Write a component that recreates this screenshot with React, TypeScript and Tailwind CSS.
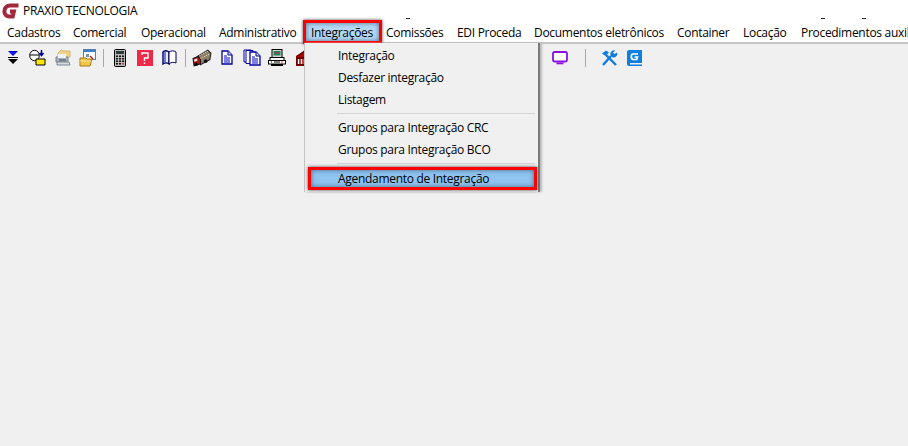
import React from "react";

const font = { fontFamily: '"Open Sans", "Noto Sans", sans-serif', letterSpacing: "-0.3px" };

function Logo() {
  return (
    <svg width="17" height="16" viewBox="0 0 17 16" className="shrink-0">
      <path d="M16.500 2.400H8.500C4.500 2.400 2.400 5 2.400 8.300c0 3 2 5.200 5 5.200h3.300l1.200-5H8" fill="none" stroke="#a02a3c" strokeWidth="4" />
    </svg>
  );
}

function IconArrows() {
  return (
    <svg width="12" height="15" viewBox="0 0 12 15">
      <path d="M1 1h10L6 6z" fill="#0000c8" />
      <path d="M3 2h6L6 5z" fill="#1818ff" />
      <rect x="1" y="7" width="10" height="1" fill="#000" />
      <path d="M1 9h10l-5 5z" fill="#000" />
    </svg>
  );
}
function IconQuery() {
  return (
    <svg width="17" height="17" viewBox="0 0 17 17">
      <ellipse cx="5.500" cy="6.500" rx="4.800" ry="5.200" fill="#fff" stroke="#000" />
      <path d="M1 6h9" stroke="#000" />
      <path d="M12.500 1v5M10.500 4l2 2.500 2-2.500" fill="none" stroke="#0000a8" strokeWidth="1.500" />
      <path d="M7 10h9v6H7z" fill="#ffe800" stroke="#000" />
    </svg>
  );
}
function IconPrintFolder() {
  return (
    <svg width="18" height="18" viewBox="0 0 18 18">
      <path d="M4 4l3-3 2 1h7v6H4z" fill="#f0d48a" stroke="#d0b472" />
      <path d="M2 8h12v5H2z" fill="#aab2bb" stroke="#7c8692" />
      <path d="M4 5h8v4H4z" fill="#eef2f7" />
      <path d="M3 13h12l1 3H3z" fill="#d4dae0" stroke="#7c8692" />
      <path d="M5 11h7" stroke="#434b55" />
    </svg>
  );
}
function IconFolderWin() {
  return (
    <svg width="17" height="18" viewBox="0 0 17 18">
      <rect x="4.500" y="0.500" width="12" height="10" fill="#fff" stroke="#5c7fa8" />
      <rect x="5" y="1" width="11" height="2" fill="#3d7cc9" />
      <path d="M7 5h3v3H7z" fill="#7d93ab" />
      <path d="M11 7l3 3" stroke="#b02a2a" strokeWidth="1.500" />
      <path d="M1 9h6l1 1h5l-2 7H1z" fill="#f3c64a" stroke="#a37c18" />
      <path d="M1 12h11" stroke="#fbe49a" />
    </svg>
  );
}
function IconCalc() {
  return (
    <svg width="12" height="18" viewBox="0 0 12 18">
      <rect x="0.500" y="0.500" width="11" height="17" rx="1" fill="#b9b9b9" stroke="#000" />
      <rect x="2" y="2" width="8" height="3" fill="#2c3a3a" />
      {[6.5, 9, 11.5, 14].map((y) =>
        [2, 5, 8].map((x) => <rect key={`${x}-${y}`} x={x} y={y} width="2" height="1.500" fill={y === 14 && x === 8 ? "#d03a3a" : "#111"} />)
      )}
    </svg>
  );
}
function IconHelp() {
  return (
    <svg width="16" height="16" viewBox="0 0 16 16">
      <rect width="16" height="16" fill="#ef2948" />
      <path d="M5 5V3h6v5H7.500v3" fill="none" stroke="#fff" strokeWidth="1.400" />
      <rect x="6.800" y="12.500" width="1.400" height="1.500" fill="#fff" />
    </svg>
  );
}
function IconBook() {
  return (
    <svg width="15" height="15" viewBox="0 0 15 15">
      <path d="M1 2c2-2 4-1.500 6 0v12c-2-1.500-4-1.500-6 0z" fill="#e6eefc" stroke="#000060" strokeWidth="1.400" />
      <path d="M7 2c2-1.500 5-1.500 7 0v11c-2-1-5-1-7 1z" fill="#fff" stroke="#000060" />
      <path d="M3 2v10" stroke="#0000c8" />
    </svg>
  );
}
function IconTruck() {
  return (
    <svg width="20" height="18" viewBox="0 0 19 17">
      <path d="M5 7l10-6 3 3-1 6-9 5z" fill="#8f7f68" stroke="#222" />
      <path d="M7 6l8-4M8 9l8-4" stroke="#e4d7b8" strokeDasharray="1 1" />
      <path d="M1 9l5-2 2 3v4l-6 2z" fill="#b01818" stroke="#111" />
      <circle cx="4" cy="14.500" r="1.700" fill="#111" />
      <circle cx="13" cy="11.500" r="1.700" fill="#111" />
      <path d="M2 10l3-1v2l-3 1z" fill="#e8e8e8" />
    </svg>
  );
}
function DocShape({ x = 0, y = 0 }: { x?: number; y?: number }) {
  return (
    <g transform={`translate(${x} ${y})`}>
      <path d="M1 1h6l4 4v9H1z" fill="#fff" stroke="#0000a0" strokeWidth="1.300" />
      <path d="M7 1v4h4" fill="#c8d0f4" stroke="#0000a0" />
      <path d="M3 6h3M3 8h6M3 10h6M3 12h6" stroke="#0000c0" />
    </g>
  );
}
function IconDoc() {
  return (
    <svg width="12" height="15" viewBox="0 0 12 15">
      <DocShape />
    </svg>
  );
}
function IconDocs() {
  return (
    <svg width="18" height="17" viewBox="0 0 18 17">
      <path d="M1 1h7v12H1z" fill="#fff" stroke="#0000a0" />
      <path d="M3 1.500h7v13H3z" fill="#fff" stroke="#0000a0" />
      <DocShape x={6} y={2} />
    </svg>
  );
}
function IconPrinter() {
  return (
    <svg width="18" height="18" viewBox="0 0 18 18">
      <rect x="4" y="0.500" width="10" height="8" fill="#d4d4d4" stroke="#000" />
      <rect x="5.500" y="2" width="7" height="4.500" fill="#1a8a5a" />
      <rect x="7.500" y="3" width="3" height="2" fill="#b03060" />
      <rect x="2" y="8.500" width="14" height="3" fill="#fff" stroke="#000" />
      <rect x="0.500" y="11.500" width="17" height="3.500" fill="#fff" stroke="#000" />
      <path d="M3 13h1M6 13h6" stroke="#000" />
      <path d="M13 13h2" stroke="#d03030" />
      <rect x="3" y="15" width="12" height="2" fill="#000" />
    </svg>
  );
}
function IconHouse() {
  return (
    <svg width="14" height="17" viewBox="0 0 14 17">
      <path d="M1 7.500L11 0l3 3v14H1z" fill="#b00000" />
      <path d="M1 7.500L12 1" stroke="#3a0000" />
      <path d="M3.500 10v5M6.500 10v5M9.500 10v5" stroke="#fff" strokeWidth="1.500" />
      <path d="M2 9h10v7H2z" fill="none" stroke="#000" strokeWidth="0.800" />
    </svg>
  );
}
function IconMonitor() {
  return (
    <svg width="16" height="14" viewBox="0 0 16 14">
      <rect x="1" y="1" width="14" height="9.500" rx="1.500" fill="#fff" stroke="#8a10e0" strokeWidth="1.800" />
      <rect x="4.500" y="11.500" width="7" height="1.800" fill="#8a10e0" />
    </svg>
  );
}
function IconTools() {
  return (
    <svg width="17" height="16" viewBox="0 0 17 16">
      <path d="M2 15L10 6" stroke="#0f7ee0" strokeWidth="2.400" />
      <path d="M15 15L5 5" stroke="#0f7ee0" strokeWidth="2.400" />
      <path d="M1 3.500L5 0.500l3 2-3.500 3.500z" fill="#0f7ee0" />
      <path d="M16 2.500a3.600 3.600 0 0 1-5.500 4.200L9.500 5a3.600 3.600 0 0 1 4.500-4.500l-2 2.200 1.500 1.300z" fill="#0f7ee0" />
    </svg>
  );
}
function IconGuide() {
  return (
    <svg width="15" height="16" viewBox="0 0 15 16">
      <path d="M2 0h13v13H3v1.500h12V16H2a2 2 0 0 1-2-2V2a2 2 0 0 1 2-2z" fill="#0f80e0" />
      <path d="M11 4H6C4.800 4 4.300 5 4.300 6.500S5 9.500 6.300 9.500h3.500L10.500 7H7.500" fill="none" stroke="#fff" strokeWidth="1.700" />
    </svg>
  );
}

const menus: [string, string][] = [
  ["Cadastros", "w-[66px]"],
  ["Comercial", "w-[68px]"],
  ["Operacional", "w-[78px]"],
  ["Administrativo", "w-[92px]"],
  ["Integrações", "w-[75px]"],
  ["Comissões", "w-[71px]"],
  ["EDI Proceda", "w-[77px]"],
  ["Documentos eletrônicos", "w-[143px]"],
  ["Container", "w-[66px]"],
  ["Locação", "w-[58px]"],
  ["Procedimentos auxil", "w-[107px]"],
];

function Slot({ children }: { children: React.ReactNode }) {
  return <div className="flex w-[25px] shrink-0 items-center justify-center">{children}</div>;
}
function Sep({ className = "mx-[3px]" }: { className?: string }) {
  return <div className={`h-[18px] w-px shrink-0 bg-[#a8a8a8] ${className}`} />;
}
function Row({ children }: { children: React.ReactNode }) {
  return <div className="flex h-[22px] items-center pl-[33px]">{children}</div>;
}
function MenuSep() {
  return <div className="my-[2px] ml-[32px] mr-[3px] h-px bg-[#d4d4d4]" />;
}

export default function App() {
  return (
    <div className="relative h-[446px] w-[908px] overflow-hidden bg-[#f0f0f0] text-[12px] text-black" style={font}>
      <div className="bg-white">
        <div className="flex h-[22px] items-center gap-[4px] pl-[2px]">
          <Logo />
          <span>PRAXIO TECNOLOGIA</span>
        </div>
        <div className="flex h-[20px] items-center overflow-hidden whitespace-nowrap pl-[7px] pt-[2px]">
          {menus.map(([m, w]) => (
            <span key={m} className={`shrink-0 ${w}`}>
              {m}
            </span>
          ))}
        </div>
      </div>
      <div className="h-[2px] bg-[#c4c4c4]" />
      <div className="flex h-[27px] items-center">
        <Slot><IconArrows /></Slot>
        <Slot><IconQuery /></Slot>
        <Slot><IconPrintFolder /></Slot>
        <Slot><IconFolderWin /></Slot>
        <Sep />
        <Slot><IconCalc /></Slot>
        <Slot><IconHelp /></Slot>
        <Slot><IconBook /></Slot>
        <Sep />
        <Slot><IconTruck /></Slot>
        <Slot><IconDoc /></Slot>
        <Slot><IconDocs /></Slot>
        <Slot><IconPrinter /></Slot>
        <Slot><IconHouse /></Slot>
        <div className="w-[233px] shrink-0" />
        <Slot><IconMonitor /></Slot>
        <Sep className="ml-[13px] mr-[11px]" />
        <Slot><IconTools /></Slot>
        <Slot><IconGuide /></Slot>
      </div>

      {/* stray title-bar marks */}
      <div className="absolute left-[406px] top-[18px] h-px w-[4px] bg-[#222]" />
      <div className="absolute left-[821px] top-[18px] h-px w-[4px] bg-[#222]" />
      <div className="absolute left-[862px] top-[18px] h-px w-[4px] bg-[#222]" />

      {/* highlighted menu title */}
      <div className="absolute left-[303px] top-[20px] flex h-[24px] w-[79px] items-center border-[3px] border-[#ff0000] bg-[#b4d8f6] pl-[5px] pt-px shadow-[0_0_3px_#444,inset_0_0_5px_#4f6f8f]">
        Integrações
      </div>

      {/* dropdown */}
      <div className="absolute left-[304px] top-[43px] h-[149px] w-[236px] border-l border-r-[2px] border-l-[#c4c4c4] border-r-[#7a7a7a] bg-[#f0f0f0] pt-[2px] shadow-[2px_0_2px_#bbb]">
        <Row>Integração</Row>
        <Row>Desfazer integração</Row>
        <Row>Listagem</Row>
        <MenuSep />
        <div className="h-[1px]" />
        <Row>Grupos para Integração CRC</Row>
        <Row>Grupos para Integração BCO</Row>
        <MenuSep />
        <div className="h-[1px]" />
      </div>
      <div className="absolute left-[308px] top-[167px] flex h-[23px] w-[229px] items-center border-[3px] border-[#ff0000] bg-[#90c4f0] pl-[27px] shadow-[0_0_3px_#444,inset_0_0_5px_#44698c]">
        Agendamento de Integração
      </div>
    </div>
  );
}
